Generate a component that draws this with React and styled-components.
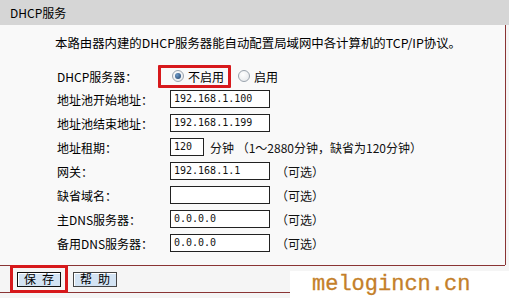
import styled, { createGlobalStyle } from 'styled-components';

const Global = createGlobalStyle`
	html, body {
		margin: 0;
		padding: 0;
		background: #f5f5f5;
	}
	body {
		font-family: 'Noto Sans CJK SC', 'DejaVu Sans', sans-serif;
		font-size: 12px;
		color: #000;
	}
`;

const Page = styled.div`
	position: relative;
	width: 509px;
	height: 298px;
	overflow: hidden;
`;

const Header = styled.div`
	height: 25px;
	line-height: 25px;
	padding-left: 10px;
	background: #d6d6d6;
	font-size: 12px;
`;

const Body = styled.div`
	width: 505px;
	border-right: 1px solid #8a3434;
	background: #f9f9f9;
`;

const Intro = styled.p`
	margin: 0;
	padding: 10px 0 0 55px;
	height: 30px;
	line-height: 16px;
	font-size: 12.4px;
`;

const Form = styled.div`
	display: grid;
	grid-template-columns: 113px 1fr;
	grid-template-rows: 22px repeat(7, 24px);
	padding: 0 0 10px 57px;
`;

const Label = styled.div`
	display: flex;
	align-items: center;
	font-size: 12px;
`;

const Control = styled.div`
	display: flex;
	align-items: center;
	gap: 8px;
`;

const Input = styled.div`
	box-sizing: border-box;
	width: ${(p) => p.$w || 100}px;
	height: 18px;
	border: 1px solid #222;
	background: #fff;
	padding-left: 3px;
	font-family: 'DejaVu Sans Mono', monospace;
	font-size: 10px;
	line-height: 15px;
	color: #111;
`;

const Note = styled.span`
	font-size: 12px;
	color: #111;
	margin-left: ${(p) => p.$ml || 0}px;
`;

const Highlight = styled.div`
	box-sizing: border-box;
	display: flex;
	align-items: center;
	border: 3px solid #d7191c;
	border-radius: 1px;
	padding: ${(p) => p.$pad};
	margin: ${(p) => p.$m};
	align-self: ${(p) => (p.$stretch ? 'stretch' : 'auto')};
`;

const RadioItem = styled.label`
	display: flex;
	align-items: center;
	gap: 4px;
	font-size: 12px;
	margin-left: ${(p) => p.$ml || 0}px;
`;

const RadioDot = styled.span`
	box-sizing: border-box;
	width: 12px;
	height: 12px;
	border-radius: 50%;
	border: 1px solid #9aa3ad;
	background: radial-gradient(circle at 40% 35%, #ffffff, #e2e5e8);
	display: flex;
	align-items: center;
	justify-content: center;

	&::after {
		content: '';
		display: ${(p) => (p.$on ? 'block' : 'none')};
		width: 6px;
		height: 6px;
		border-radius: 50%;
		background: radial-gradient(circle at 35% 35%, #6d9ac8, #1e3f66);
	}
`;

const Footer = styled.div`
	box-sizing: border-box;
	width: 505px;
	height: 28px;
	border-top: 1px solid #8a3434;
	border-bottom: 1px solid #8a3434;
	display: flex;
	align-items: center;
	padding-left: 10px;
	gap: 5px;
`;

const Button = styled.div`
	box-sizing: border-box;
	width: 44px;
	height: 15px;
	border: 1px solid ${(p) => (p.$dark ? '#111' : '#444')};
	background: #d3e3f3;
	display: flex;
	align-items: center;
	justify-content: center;
	letter-spacing: 6px;
	padding-left: 6px;
	font-size: 12px;
	line-height: 1;
	box-shadow: inset 1px 1px 0 #fff;
`;

const Watermark = styled.div`
	position: absolute;
	left: 290px;
	top: 271px;
	width: 219px;
	height: 27px;
	background: #fff;
	padding-left: 22px;
	box-sizing: border-box;
	font-family: 'Liberation Mono', monospace;
	font-size: 22px;
	line-height: 27px;
	color: #c47f2a;
	-webkit-text-stroke: 0.3px #c47f2a;
`;

const rows = [
	{ label: '地址池开始地址：', value: '192.168.1.100' },
	{ label: '地址池结束地址：', value: '192.168.1.199' },
	{ label: '地址租期：', value: '120', w: 34, note: '分钟 （1～2880分钟，缺省为120分钟）' },
	{ label: '网关：', value: '192.168.1.1', note: '（可选）' },
	{ label: '缺省域名：', value: '', note: '（可选）' },
	{ label: '主DNS服务器：', value: '0.0.0.0', note: '（可选）' },
	{ label: '备用DNS服务器：', value: '0.0.0.0', note: '（可选）' },
];

export default function App() {
	return (
		<Page>
			<Global />
			<Header>DHCP服务</Header>
			<Body>
				<Intro>本路由器内建的DHCP服务器能自动配置局域网中各计算机的TCP/IP协议。</Intro>
				<Form>
					<Label>DHCP服务器：</Label>
					<Control>
						<Highlight $pad="0 4px 0 11px" $m="0 0 0 -12px">
							<RadioItem>
								<RadioDot $on />
								不启用
							</RadioItem>
						</Highlight>
						<RadioItem $ml={-1}>
							<RadioDot />
							启用
						</RadioItem>
					</Control>
					{rows.map((r) => (
						<>
							<Label key={r.label}>{r.label}</Label>
							<Control key={r.label + 'c'}>
								<Input $w={r.w}>{r.value}</Input>
								{r.note && <Note $ml={r.w ? -2 : -2}>{r.note}</Note>}
							</Control>
						</>
					))}
				</Form>
			</Body>
			<Footer>
				<Highlight $stretch $pad="0 4px" $m="-1px 0">
					<Button $dark>保存</Button>
				</Highlight>
				<Button>帮助</Button>
			</Footer>
			<Watermark>melogincn.cn</Watermark>
		</Page>
	);
}
